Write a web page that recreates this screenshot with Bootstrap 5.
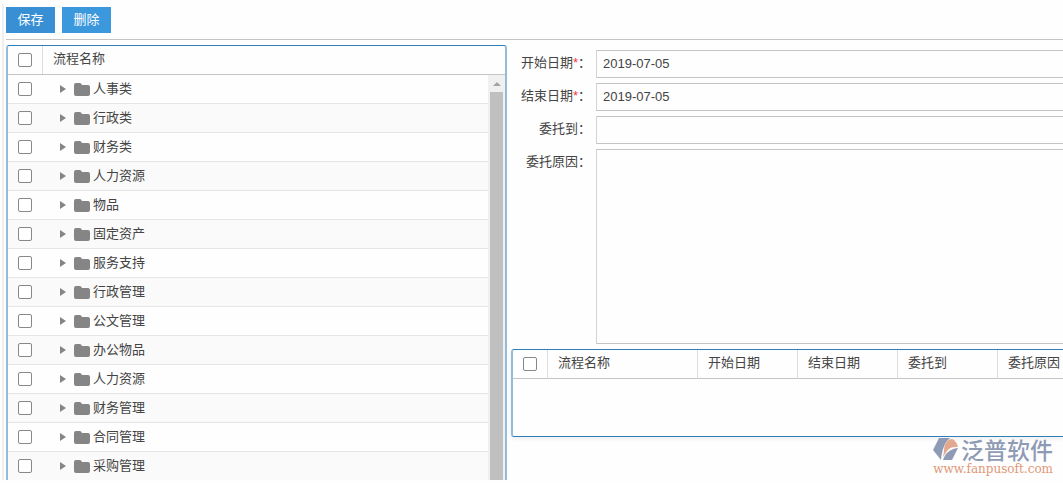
<!DOCTYPE html>
<html lang="zh-CN">
<head>
<meta charset="utf-8">
<meta name="viewport" content="width=device-width, initial-scale=1">
<title>流程委托</title>
<link href="https://cdn.jsdelivr.net/npm/bootstrap@5.3.0/dist/css/bootstrap.min.css" rel="stylesheet">
<style>
body{font:13px/20px "Liberation Sans","Noto Sans CJK SC",sans-serif;color:#444;background:#fefefe}
.page{height:100vh;padding-bottom:3px}
.edge{width:2px;margin:4px 2px 0 2px;background:#efefef}
.toolbar{height:40px;padding-top:7px;gap:7px;border-bottom:1px solid #c4c4c4}
.toolbar .btn{--bs-btn-bg:#3c98dd;--bs-btn-border-color:#3c98dd;--bs-btn-color:#fff;--bs-btn-hover-bg:#2f87c9;--bs-btn-hover-color:#fff;width:49px;height:26px;padding:0;font-size:13px;line-height:22px;border-radius:0}
.toolbar .btn:first-child{--bs-btn-bg:#388fd3;--bs-btn-border-color:#388fd3}
.split{display:grid;grid-template-columns:minmax(0,501fr) minmax(0,552fr);gap:4px;padding-top:5px;min-height:0}
.panel{border:1px solid #2f7fba;border-left:2px solid #93bcdb;border-right:2px solid #93bcdb;border-radius:3px;overflow:hidden;background:#fefefe}
.tree{border-bottom:0;border-radius:3px 3px 0 0}
.head-row{height:29px;border-bottom:1px solid #c4c4c4}
.head-name{padding:3px 0 0 10px}
.check-cell{width:35px;border-right:1px solid #ddd;padding-left:10px}
.tree-row{height:29px;border-bottom:1px solid #e5e5e5}
.tree-row:nth-child(even){background:#fafafa}
.tree-row .check-cell{border-right-color:transparent}
.form-check-input{width:14px;height:14px;margin:0;border:1px solid #888;border-radius:2px!important;display:block}
.tree-row label{height:26px;line-height:26px}
.arrow{width:6px;height:8px;margin:0 8px 0 17px}
.folder{width:16px;height:13px;margin:0 3px 0 0}
.scroll{width:17px;background:#f0f0f0;padding:0 2px 0 2px}
.scroll-up{height:17px}
.scroll-thumb{background:#c0c0c0}
.form-area{padding-top:5px}
.form-line{gap:5px;margin-bottom:5px}
.form-line label{flex:0 0 80px;text-align:right;white-space:nowrap;line-height:26px}
.must{color:#f33}
.form-line .form-control{height:28px;padding:0 6px 1px;font-size:13px;color:#444;background:#fefefe;border:1px solid #c4c4c4;border-left-color:#d4d4d4;border-right:0;border-radius:0}
.form-line textarea.form-control{height:195px;resize:none}
.grid-panel{border-right:0;border-bottom-color:#2f7fba;border-radius:3px 0 0 3px;height:88px;box-shadow:0 2px 4px #eee}
.data-grid{table-layout:fixed;width:635px;border-collapse:separate;border-spacing:0}
.data-grid th{height:29px;padding:0 10px 3px;font-weight:400;white-space:nowrap;border-bottom:1px solid #c4c4c4;border-right:1px solid #ddd}
.data-grid th:first-child{padding:0 0 0 10px}
.brand{position:absolute;right:10px;bottom:8px;color:#8f9bb5}
.brand svg{margin-right:2px}
.brand-name{font:500 23px/28px "Noto Sans CJK SC",sans-serif}
.brand-url{font:12px/12px "DejaVu Serif",serif;color:#e09878;text-align:right}
</style>
</head>
<body>
<div class="page d-flex overflow-hidden">
  <div class="edge flex-shrink-0"></div>
  <main class="d-flex flex-column flex-grow-1 overflow-hidden">
    <div class="toolbar d-flex align-items-start flex-shrink-0">
      <button type="button" class="btn">保存</button>
      <button type="button" class="btn">删除</button>
    </div>
    <div class="split flex-grow-1">
      <section class="panel tree d-flex flex-column">
        <div class="head-row d-flex flex-shrink-0">
          <div class="check-cell d-flex align-items-center"><input class="form-check-input" type="checkbox" aria-label="全选"></div>
          <div class="head-name">流程名称</div>
        </div>
        <div class="d-flex flex-grow-1 overflow-hidden">
          <div class="flex-grow-1" id="rows"></div>
          <div class="scroll d-flex flex-column">
            <div class="scroll-up d-flex justify-content-center align-items-center"><svg width="8" height="4"><path d="M0 4 4 0l4 4z" fill="#a3a3a3"/></svg></div>
            <div class="scroll-thumb flex-grow-1"></div>
          </div>
        </div>
      </section>
      <section>
        <form class="form-area">
          <div class="form-line d-flex"><label for="start">开始日期<span class="must">*</span>：</label><input id="start" class="form-control" type="text" value="2019-07-05"></div>
          <div class="form-line d-flex"><label for="end">结束日期<span class="must">*</span>：</label><input id="end" class="form-control" type="text" value="2019-07-05"></div>
          <div class="form-line d-flex"><label for="to">委托到：</label><input id="to" class="form-control" type="text"></div>
          <div class="form-line d-flex"><label for="why">委托原因：</label><textarea id="why" class="form-control"></textarea></div>
        </form>
        <div class="panel grid-panel">
          <table class="data-grid">
            <colgroup><col style="width:35px"><col style="width:150px"><col style="width:100px"><col style="width:100px"><col style="width:100px"><col style="width:150px"></colgroup>
            <thead><tr><th><input class="form-check-input" type="checkbox" aria-label="全选"></th><th>流程名称</th><th>开始日期</th><th>结束日期</th><th>委托到</th><th>委托原因</th></tr></thead>
          </table>
        </div>
      </section>
    </div>
  </main>
</div>
<div class="brand">
  <div class="d-flex align-items-start justify-content-end">
    <svg width="26" height="26" viewBox="0 0 26 26"><g transform="translate(0 2)"><path d="M6 1h11C12 5 9 12 8 23L0 13z" fill="#8f9bb5"/><path d="M11 14C11 8 14 2 19 2c3 1 5 4 6 8-5 0-8 0-11 4l-4 6z" fill="#e4a88e"/><path d="M10 23c2-6 6-11 15-12l-6 12z" fill="#8f9bb5"/></g></svg>
    <span class="brand-name">泛普软件</span>
  </div>
  <div class="brand-url">www.fanpusoft.com</div>
</div>
<script>
const names = ['人事类','行政类','财务类','人力资源','物品','固定资产','服务支持','行政管理','公文管理','办公物品','人力资源','财务管理','合同管理','采购管理'];
document.getElementById('rows').innerHTML = names.map((name, i) => `
  <div class="tree-row d-flex align-items-center">
    <div class="check-cell"><input class="form-check-input" type="checkbox" id="n${i}"></div>
    <svg class="arrow" viewBox="0 0 6 8"><path d="M0 0l6 4-6 4z" fill="#858585"/></svg>
    <svg class="folder" viewBox="0 0 16 13"><path d="M0 2Q0 0 2 0h4q1 0 2 2h6q2 0 2 2v7q0 2-2 2H2q-2 0-2-2z" fill="#858585"/></svg>
    <label for="n${i}">${name}</label>
  </div>`).join('');
</script>
<script src="https://cdn.jsdelivr.net/npm/bootstrap@5.3.0/dist/js/bootstrap.bundle.min.js"></script>
</body>
</html>
